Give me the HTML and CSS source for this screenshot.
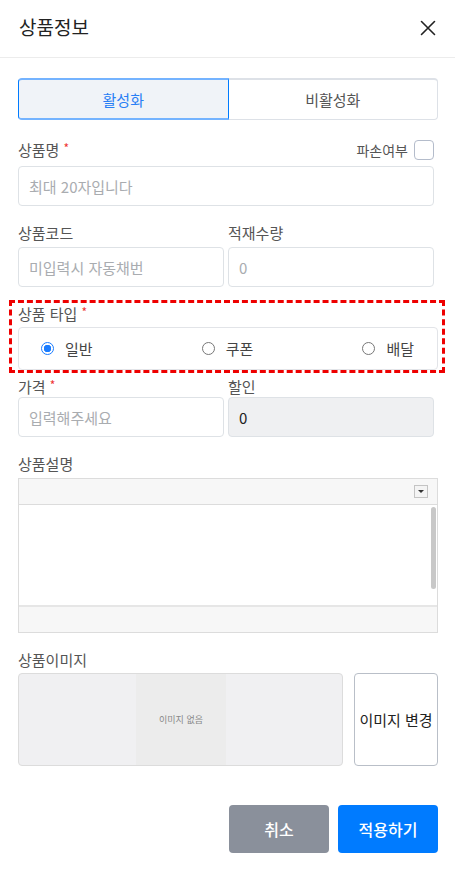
FILE: index.html
```html
<!DOCTYPE html>
<html lang="ko">
<head>
<meta charset="utf-8">
<link rel="stylesheet" href="styles.css">
</head>
<body>
<div class="modal">
  <header class="modal-header">
    <h1 class="modal-title">상품정보</h1>
    <button class="close-btn" aria-label="닫기">
      <svg width="16" height="16" viewBox="0 0 16 16"><path d="M1.5 1.5 L14.5 14.5 M14.5 1.5 L1.5 14.5" stroke="#222" stroke-width="1.6" fill="none" stroke-linecap="round"/></svg>
    </button>
  </header>
  <div class="modal-body">
    <div class="toggle">
      <div class="toggle-item active">활성화</div>
      <div class="toggle-item">비활성화</div>
    </div>

    <div class="field first narrow">
      <div class="label-row">
        <span class="label">상품명 <span class="req">*</span></span>
        <span class="check-wrap">파손여부 <span class="checkbox"></span></span>
      </div>
      <div class="input placeholder">최대 20자입니다</div>
    </div>

    <div class="field-row narrow">
      <div class="col">
        <div class="label-row"><span class="label">상품코드</span></div>
        <div class="input placeholder">미입력시 자동채번</div>
      </div>
      <div class="col">
        <div class="label-row"><span class="label">적재수량</span></div>
        <div class="input placeholder">0</div>
      </div>
    </div>

    <div class="type-field">
      <div class="type-label"><span class="label">상품 타입 <span class="req">*</span></span></div>
      <div class="radio-box">
        <span class="radio-item"><span class="radio checked"></span>일반</span>
        <span class="radio-item"><span class="radio"></span>쿠폰</span>
        <span class="radio-item"><span class="radio"></span>배달</span>
      </div>
    </div>

    <div class="field-row narrow price-row">
      <div class="col">
        <div class="label-row tight"><span class="label">가격 <span class="req">*</span></span></div>
        <div class="input placeholder">입력해주세요</div>
      </div>
      <div class="col">
        <div class="label-row tight"><span class="label">할인</span></div>
        <div class="input disabled">0</div>
      </div>
    </div>

    <div class="field desc">
      <div class="label-row"><span class="label">상품설명</span></div>
      <div class="editor">
        <div class="editor-toolbar"><span class="dd"></span></div>
        <div class="editor-content"><span class="scroll-thumb"></span></div>
        <div class="editor-footer"></div>
      </div>
    </div>

    <div class="field image">
      <div class="label-row small-gap"><span class="label">상품이미지</span></div>
      <div class="image-row">
        <div class="image-box"><div class="image-inner">이미지 없음</div></div>
        <button class="image-btn">이미지 변경</button>
      </div>
    </div>

    <div class="actions">
      <button class="btn cancel">취소</button>
      <button class="btn primary">적용하기</button>
    </div>
  </div>
</div>
</body>
</html>
```
FILE: styles.css
```css
* { box-sizing: border-box; }
html, body { margin: 0; padding: 0; background: #fff; }
body {
  font-family: "Noto Sans CJK KR", "Noto Sans", sans-serif;
  color: #212529;
  width: 455px;
}
.modal { width: 455px; }
.modal-header {
  height: 58px;
  border-bottom: 1px solid #ececec;
  display: flex;
  align-items: center;
  justify-content: space-between;
  padding: 0 19px 4px 19px;
}
.modal-title {
  margin: 0;
  font-size: 19px;
  font-weight: 400;
  color: #222;
}
.close-btn {
  border: 0;
  background: none;
  padding: 0;
  width: 16px;
  height: 16px;
  display: flex;
  margin-top: 3px;
}
.modal-body { padding: 20px 17px 0 18px; }

.toggle { display: flex; height: 42px; }
.toggle-item {
  flex: 1;
  display: flex;
  align-items: center;
  justify-content: center;
  font-size: 15px;
  color: #555;
  border: 1px solid #dde1e7;
  border-top-width: 2px;
  border-left: 0;
  border-radius: 0 4px 4px 0;
  background: #fff;
}
.toggle-item.active {
  color: #2a7ff5;
  background: #f0f3f8;
  border: 1px solid #007bff;
  border-top: 2px solid #74b3ff;
  border-bottom: 2px solid #74b3ff;
  border-radius: 4px 0 0 4px;
}

.label { font-size: 15px; color: #555; }
.req { color: #e33; font-size: 12px; vertical-align: top; }
.label-row {
  display: flex;
  justify-content: space-between;
  align-items: center;
  height: 22px;
  margin-bottom: 4px;
}
.label-row.tight { margin-bottom: 0; }
.field.first { margin-top: 19px; }
.field.first .label-row { height: 21px; margin-bottom: 6px; }
.check-wrap { display: flex; align-items: center; gap: 6px; font-size: 14px; color: #555; }
.checkbox {
  width: 20px; height: 20px;
  border: 1px solid #b4bccb;
  border-radius: 4px;
  background: #fff;
}
.narrow { margin-right: 4px; }
.input {
  height: 40px;
  border: 1px solid #dee2e6;
  border-radius: 4px;
  padding-left: 10px;
  display: flex;
  align-items: center;
  font-size: 15px;
  color: #222;
}
.input.placeholder { color: #a9acb0; }
.input.disabled { background: #eff0f2; color: #222; }

.field-row { display: grid; grid-template-columns: 1fr 1fr; gap: 4px; margin-top: 15px; }

.type-field { position: relative; margin-top: 16px; }
.type-field::before {
  content: "";
  position: absolute;
  top: -3px; bottom: -3px; left: -9px; right: -7px;
  border: 3px dashed #ee0000;
  pointer-events: none;
}
.type-label { height: 20px; display: flex; align-items: center; margin-bottom: 4px; }
.radio-box {
  height: 43px;
  border: 1px solid #e2e4e8;
  border-radius: 4px;
  display: flex;
  align-items: center;
  justify-content: space-between;
  padding: 0 23px 0 22px;
  font-size: 15px;
  color: #444;
}
.radio-item { display: flex; align-items: center; gap: 11px; }
.radio {
  width: 13px; height: 13px;
  border: 1px solid #777;
  border-radius: 50%;
  background: #fff;
}
.radio.checked {
  border: 1px solid #1a7cff;
  background: radial-gradient(circle, #1a7cff 0 3.5px, #fff 4px);
}

.price-row { margin-top: 5px; }

.field.desc { margin-top: 15px; }
.editor { border: 1px solid #dcdcdc; }
.editor-toolbar {
  height: 26px;
  background: #f7f7f7;
  border-bottom: 1px solid #dcdcdc;
  display: flex;
  align-items: center;
  justify-content: flex-end;
  padding-right: 9px;
}
.dd {
  width: 14px; height: 13px;
  border: 1px solid #c4c4c4;
  background: #f4f4f4;
  position: relative;
}
.dd::after {
  content: "";
  position: absolute;
  left: 3px; top: 4px;
  border-left: 3px solid transparent;
  border-right: 3px solid transparent;
  border-top: 3px solid #333;
}
.editor-content {
  height: 100px;
  background: #fff;
  display: flex;
  justify-content: flex-end;
  padding: 2px 1px 0 0;
}
.scroll-thumb {
  width: 5px; height: 82px;
  background: #c8c8c8;
  border-radius: 3px;
}
.editor-footer {
  height: 27px;
  background: #f7f7f7;
  border-top: 2px solid #e6e6e6;
}

.field.image { margin-top: 15px; }
.label-row.small-gap { margin-bottom: 3px; }
.image-row { display: flex; gap: 11px; height: 93px; }
.image-box {
  flex: 0 0 325px;
  background: #f0f0f2;
  border: 1px solid #dcdcdc;
  border-radius: 4px;
  display: flex;
  justify-content: center;
  padding-left: 1px;
}
.image-inner {
  width: 90px;
  background: #ececec;
  display: flex;
  align-items: center;
  justify-content: center;
  font-size: 9px;
  color: #888;
}
.image-btn {
  flex: 1;
  background: #fff;
  border: 1px solid #b9bfc8;
  border-radius: 4px;
  font-family: inherit;
  font-size: 15px;
  color: #222;
  padding: 0;
  white-space: nowrap;
}

.actions {
  display: flex;
  justify-content: flex-end;
  gap: 9px;
  margin-top: 39px;
}
.btn {
  width: 100px;
  height: 48px;
  border: 0;
  border-radius: 4px;
  font-family: inherit;
  font-size: 16px;
  font-weight: 500;
  color: #fff;
}
.btn.cancel { background: #8a909b; }
.btn.primary { background: #007bff; }
```
